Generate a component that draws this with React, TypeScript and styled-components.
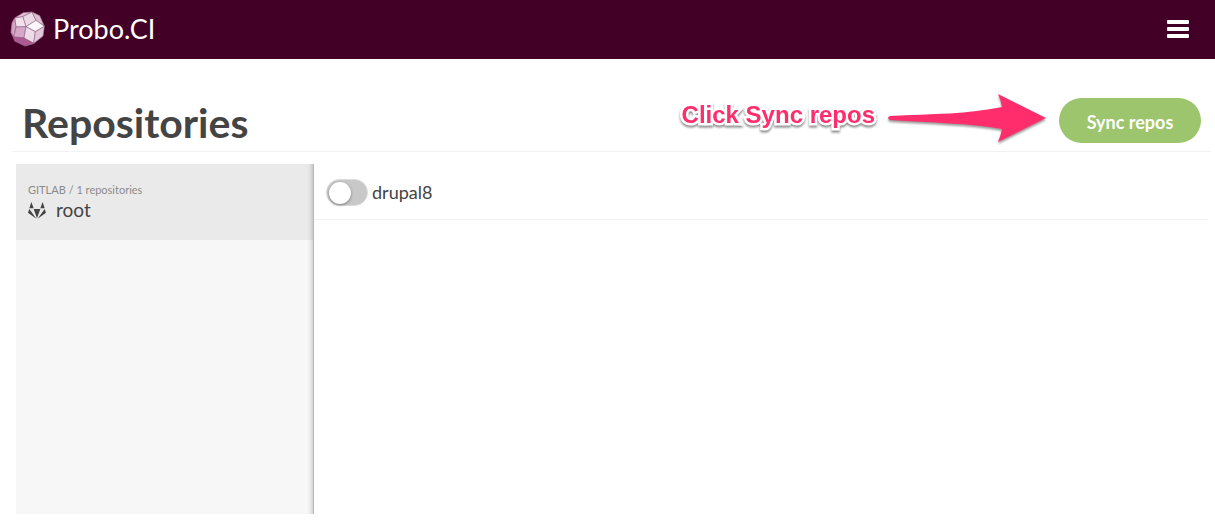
import React from "react";
import styled, { createGlobalStyle } from "styled-components";

const GlobalStyle = createGlobalStyle`
  *, *::before, *::after { box-sizing: border-box; }
  body {
    margin: 0;
    background: #fff;
    color: #444;
    font-family: Lato, "Open Sans", sans-serif;
  }
`;

const Header = styled.header`
  display: flex;
  align-items: center;
  justify-content: space-between;
  height: 59px;
  padding: 0 25px 2px 10px;
  background: #430026;
`;

const Brand = styled.a`
  display: flex;
  align-items: center;
  gap: 7px;
  color: #fff;
  font-size: 27px;
  line-height: 32px;
  text-decoration: none;
`;

const MenuButton = styled.button`
  display: flex;
  padding: 0;
  border: 0;
  background: none;
  color: #fff;
`;

const TitleBar = styled.div`
  position: relative;
  display: flex;
  align-items: flex-start;
  justify-content: space-between;
  margin: 39px 4px 0 12px;
  padding: 0 10px 4px;
  border-bottom: 1px solid #f2f2f2;
`;

const Title = styled.h1`
  margin: 0;
  font-size: 41px;
  font-weight: 700;
  line-height: 49px;
`;

const SyncButton = styled.button`
  width: 142px;
  height: 45px;
  padding: 2px 0 0;
  border: 0;
  border-radius: 23px;
  background: #9cc56d;
  color: #fff;
  font-family: inherit;
  font-size: 18px;
  font-weight: 700;
`;

const Callout = styled.div`
  position: absolute;
  right: 164px;
  top: -6px;
  display: flex;
  align-items: center;
  gap: 12px;
  pointer-events: none;
`;

const CalloutText = styled.span`
  padding-bottom: 6px;
  color: #ff2d6b;
  font: 700 24px/28px "Liberation Sans", Arial, sans-serif;
  -webkit-text-stroke: 5px #fff;
  paint-order: stroke fill;
  filter: drop-shadow(0 2px 1px rgba(0, 0, 0, 0.45));
`;

const ArrowSvg = styled.svg`
  filter: drop-shadow(0 2px 1px rgba(0, 0, 0, 0.4));
`;

const Panels = styled.div`
  display: grid;
  grid-template-columns: 298px 1fr;
  margin: 12px 7px 0 16px;
`;

const Sidebar = styled.aside`
  min-height: 350px;
  border-right: 1px solid #b8b8b8;
  background: #f7f7f7;
  box-shadow: inset -6px 0 5px -5px rgba(0, 0, 0, 0.22);
`;

const Organization = styled.a`
  display: block;
  height: 76px;
  padding: 19px 12px;
  background: rgba(0, 0, 0, 0.05);
  color: inherit;
  text-decoration: none;
`;

const Provider = styled.div`
  color: #8a8a8a;
  font-size: 11px;
  line-height: 14px;
`;

const OrgName = styled.div`
  display: flex;
  align-items: center;
  gap: 10px;
  font-size: 19px;
  line-height: 26px;
`;

const RepoList = styled.ul`
  margin: 0;
  padding: 0;
  list-style: none;
`;

const RepoRow = styled.li`
  display: flex;
  align-items: center;
  height: 56px;
  padding: 1px 12px 0;
  border-bottom: 1px solid #f2f2f2;
`;

const RepoLabel = styled.label`
  display: flex;
  align-items: center;
  gap: 4px;
  font-size: 18px;
  line-height: 24px;
`;

const Toggle = styled.input`
  appearance: none;
  width: 42px;
  height: 27px;
  margin: 0;
  padding: 2px;
  border: 1px solid #dcdcdc;
  border-radius: 14px;
  background: #c8c8c8;

  &::before {
    content: "";
    display: block;
    width: 22px;
    height: 22px;
    border-radius: 50%;
    background: #fff;
    box-shadow: 0 1px 3px rgba(0, 0, 0, 0.4);
  }

  &:checked {
    background: #9cc56d;
  }

  &:checked::before {
    margin-left: auto;
  }
`;

const ProboLogo = () => (
  <svg width="36" height="36" viewBox="31 33 108 108" aria-hidden="true">
    <g stroke="#8c5478" strokeWidth="1.6" strokeLinejoin="round">
      <path fill="#d9b3cd" d="M71 38 97 36 120 47 134 79 130 108 102 131 76 138 45 123 34 97 37 69 45 54Z" />
      <path fill="#e2c3d8" d="M45 54 71 38 97 36 69 50Z" />
      <path fill="#ecdae6" d="M69 50 97 36 109 61 79 80Z" />
      <path fill="#dcbfd3" d="M97 36 120 47 134 79 109 61Z" />
      <path fill="#f0e3ec" d="M45 54 69 50 79 80 49 81Z" />
      <path fill="#d3a5c5" d="M45 54 49 81 42 111 34 97 37 69Z" />
      <path fill="#fbf6fa" d="M79 80 109 61 134 79 107 95Z" />
      <path fill="#d4a8c6" d="M49 81 79 80 73 114 42 111Z" />
      <path fill="#ecdce7" d="M79 80 107 95 102 130 73 114Z" />
      <path fill="#e2c8da" d="M107 95 134 79 130 108 102 130Z" />
      <path fill="#ad5a93" d="M42 111 73 114 102 130 76 138 45 123Z" />
    </g>
  </svg>
);

const MenuIcon = () => (
  <svg width="24" height="20" viewBox="0 0 24 20" fill="currentColor" aria-hidden="true">
    <rect x="1" y="1" width="22" height="4" rx="1" />
    <rect x="1" y="8" width="22" height="4" rx="1" />
    <rect x="1" y="15" width="22" height="4" rx="1" />
  </svg>
);

const GitlabIcon = () => (
  <svg width="18" height="17" viewBox="0 0 54 51" fill="#444" aria-hidden="true">
    <path d="M10 0 17 19H4ZM44 0 50 19H37ZM17 21H37L27 49ZM4 21 25 50 0 32ZM50 21 29 50 54 32Z" />
  </svg>
);

const Arrow = () => (
  <ArrowSvg width="160" height="52" viewBox="0 0 160 52" aria-hidden="true">
    <path
      fill="#ff2d6b"
      d="M3 24C45 22 82 22 115 15Q114 8 111 2L159 26 111 50Q114 43 115 37C82 31 45 31 3 28Q-1 26 3 24Z"
    />
  </ArrowSvg>
);

export default function App() {
  return (
    <>
      <GlobalStyle />
      <Header>
        <Brand href="#">
          <ProboLogo />
          Probo.CI
        </Brand>
        <MenuButton type="button" aria-label="Menu">
          <MenuIcon />
        </MenuButton>
      </Header>
      <main>
        <TitleBar>
          <Title>Repositories</Title>
          <SyncButton type="button">Sync repos</SyncButton>
          <Callout>
            <CalloutText>Click Sync repos</CalloutText>
            <Arrow />
          </Callout>
        </TitleBar>
        <Panels>
          <Sidebar>
            <Organization href="#">
              <Provider>GITLAB / 1 repositories</Provider>
              <OrgName>
                <GitlabIcon />
                root
              </OrgName>
            </Organization>
          </Sidebar>
          <RepoList>
            <RepoRow>
              <RepoLabel>
                <Toggle type="checkbox" />
                drupal8
              </RepoLabel>
            </RepoRow>
          </RepoList>
        </Panels>
      </main>
    </>
  );
}
